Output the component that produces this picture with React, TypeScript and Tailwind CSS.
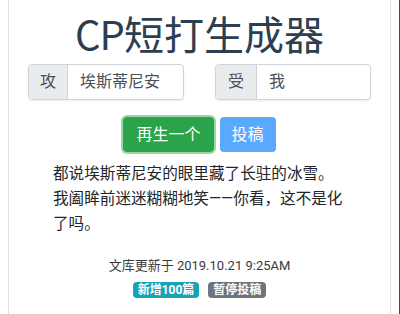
import React from 'react';

export default function App() {
  return (
    <div className="w-[400px] h-[314px] bg-white overflow-hidden border-r border-[#4a4a4a]" style={{ fontFamily: 'Roboto, "Noto Sans CJK SC", sans-serif' }}>
      <div className="mx-[8px] h-full border-x border-[#e2e2e2] text-[#2c3e50]">
        <h1
          className="pt-[9px] text-center text-[40px] leading-[48px] font-normal text-[#2c3e50]"
          style={{ fontFamily: '"Noto Sans CJK SC", sans-serif' }}
        >
          <span className="tracking-[-1px]">CP</span>短打生成器
        </h1>

        <div className="mt-[7px] flex justify-center gap-[31px]">
          <div className="flex h-[36px] w-[156px] rounded border border-[#ced4da] shadow-[0_1px_2px_rgba(0,0,0,0.08)] overflow-hidden">
            <span className="flex w-[39px] items-center justify-center bg-[#e9ecef] border-r border-[#ced4da] text-[16px] text-[#495057]">攻</span>
            <span className="flex flex-1 items-center px-3 text-[16px] text-[#495057]">埃斯蒂尼安</span>
          </div>
          <div className="flex h-[36px] w-[156px] rounded border border-[#ced4da] shadow-[0_1px_2px_rgba(0,0,0,0.08)] overflow-hidden">
            <span className="flex w-[41px] items-center justify-center bg-[#e9ecef] border-r border-[#ced4da] text-[16px] text-[#495057]">受</span>
            <span className="flex flex-1 items-center px-3 text-[16px] text-[#495057]">我</span>
          </div>
        </div>

        <div className="mt-[17px] flex justify-center gap-[6px]">
          <button className="h-[35px] rounded px-3 bg-[#2aa44a] border border-[#28a745] text-white text-[16px] leading-none shadow-[0_0_0_2px_rgba(72,180,97,0.55)]">
            再生一个
          </button>
          <button className="h-[35px] rounded px-3 bg-[#59a9ff] text-white text-[16px] leading-none">
            投稿
          </button>
        </div>

        <p className="mt-[10px] ml-[44px] w-[304px] text-[15.6px] leading-[24.8px] text-[#212529]">
          都说埃斯蒂尼安的眼里藏了长驻的冰雪。
          <br />
          我阖眸前迷迷糊糊地笑——你看，这不是化了吗。
        </p>

        <div className="mt-[20px] text-center text-[13px] leading-[20px] text-[#3a3a3a]">
          文库更新于 2019.10.21 9:25AM
        </div>

        <div className="mt-[6px] flex justify-center gap-[9px]">
          <span className="rounded-[4px] bg-[#17a2b8] px-[5px] text-[12px] leading-[16px] font-bold text-white">新增100篇</span>
          <span className="rounded-[4px] bg-[#6c757d] px-[5px] text-[12px] leading-[16px] font-bold text-white">暂停投稿</span>
        </div>
      </div>
    </div>
  );
}
